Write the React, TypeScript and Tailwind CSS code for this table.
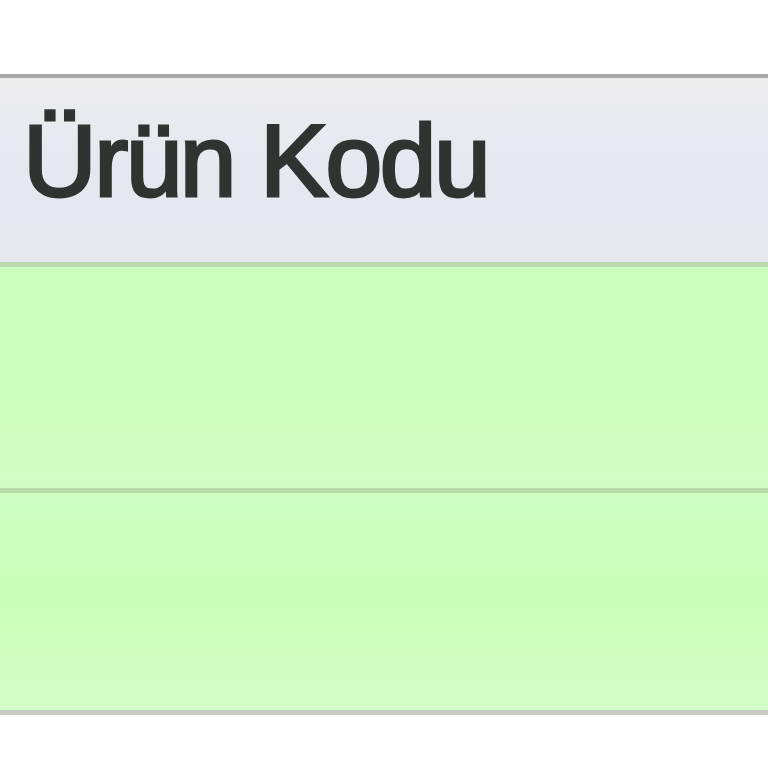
export default function App() {
  return (
    <div className="w-[768px] h-[768px] bg-white pt-[74px] overflow-hidden" style={{ fontFamily: '"Liberation Sans", Arial, sans-serif' }}>
      <div className="border-t-4 border-[#a9a9a9]">
        <div className="h-[184px] pt-[32px] pl-[23px] bg-gradient-to-b from-[#ededed] via-[#e6e8f1] to-[#e4e8ea]">
          <div className="text-[102px] leading-none text-[#303431] tracking-[-2.5px] [-webkit-text-stroke:3px_#303431]">Ürün Kodu</div>
        </div>
        <div className="h-[5px] bg-[#bad9ad]" />
        <div className="h-[221px] bg-gradient-to-b from-[#ccffbb] via-[#ccffbb] to-[#d2fcc4]" />
        <div className="h-[5px] bg-[#b8dca9]" />
        <div className="h-[217px] bg-gradient-to-b from-[#cdfdc2] via-[#caffb6] to-[#d4fcc8]" />
        <div className="h-[5px] bg-[#c6c9c4]" />
      </div>
    </div>
  );
}
